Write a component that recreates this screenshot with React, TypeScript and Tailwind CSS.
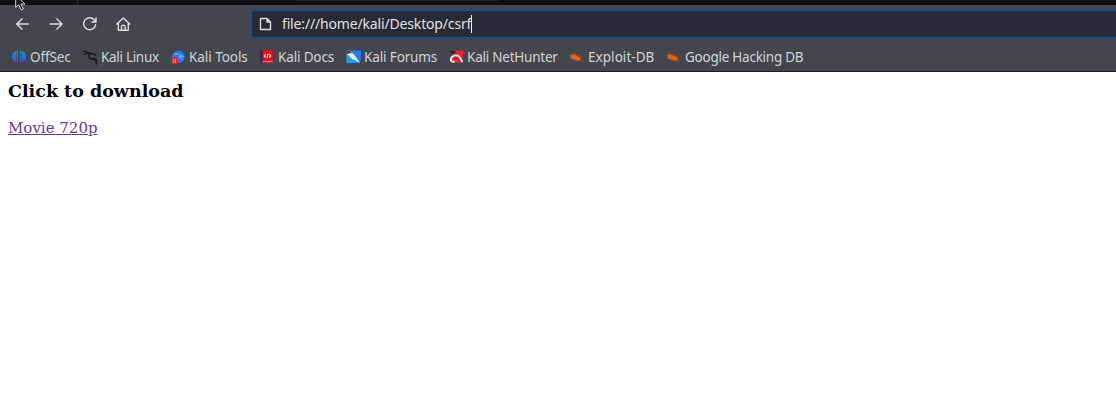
import type { ReactNode } from "react";

const OffSecIcon = () => (
  <svg viewBox="0 0 14 14" className="block size-3.5">
    <defs>
      <linearGradient id="offsec" x1="0" y1="0" x2="0" y2="1">
        <stop offset="0" stopColor="#169aa8" />
        <stop offset=".5" stopColor="#2572cf" />
        <stop offset="1" stopColor="#5a3cf0" />
      </linearGradient>
    </defs>
    <path d="M4 .8C1.6 1.6 0 4 0 6.8s1.7 4.8 4 5.3zM4.6.7C5.5.3 6 .8 6 2v10.5L4.6 13zM8 2c0-1.2.5-1.7 1.4-1.3V13L8 12.5zM10 .8C12.4 1.6 14 4 14 6.8s-1.7 4.8-4 5.3z" fill="url(#offsec)" />
  </svg>
);

const KaliIcon = () => (
  <svg viewBox="0 0 15 15" className="block h-[15px] w-[15px]" fill="none" stroke="#1b1c20" strokeLinecap="round" strokeLinejoin="round">
    <path d="M.6 1.4 4 1.9l3 1.4" strokeWidth="1.3" />
    <path d="m1.2 4.3 2.4-1 4 .2 3.4.5 1.8 1.4" strokeWidth="1.6" />
    <path d="M7.2 3.8C5 5.2 5.2 7.8 7.6 8.6c2.8.2 5 .8 5.6 3.4l.2 2" strokeWidth="1.7" />
    <path d="m8 8.5 3.8.2 2.3 1.7" strokeWidth="1.5" />
  </svg>
);

const ToolsIcon = () => (
  <svg viewBox="0 0 15 15" className="block h-[15px] w-[15px]">
    <circle cx="7.4" cy="6.8" r="6.2" fill="#2478f2" />
    <path d="M2.8 4.6c2-1.2 4.2-.9 6 .5 1.6 0 2.9.5 3.7 1.8-1.8-.9-3.3-.8-4.5.2 1.7.3 2.9 1.2 3.4 2.7" fill="none" stroke="#8fc0f4" strokeWidth=".9" />
    <circle cx="3.6" cy="10.8" r="3.5" fill="#e92732" />
    <path d="M2.8 8.8v4M4.5 8.8v4" stroke="#f2a0a1" strokeWidth=".8" />
  </svg>
);

const DocsIcon = () => (
  <svg viewBox="0 0 13 14" className="block h-3.5 w-[13px]">
    <path d="M.5 0H12.5v11.7H.5z" fill="#e01117" />
    <path d="M.5 0H2.5v13.5H.5z" fill="#391f48" />
    <path d="M2.5 11.3h10v1h-10z" fill="#b7b9bf" />
    <path d="M2.5 12.3h10v1.3h-10z" fill="#c41922" />
    <path d="M5.8 4.2 4.2 6l1.6 1.7M9.2 4.2 10.8 6 9.2 7.7M8.1 4 6.9 8" fill="none" stroke="#f7d9dc" strokeWidth="1.1" />
  </svg>
);

const ForumsIcon = () => (
  <svg viewBox="0 0 15 14" className="block h-3.5 w-[15px]">
    <path d="M4 .5h11v9L12.5 13H.5V4z" fill="#237bee" />
    <path d="M.5 4 11 13H.5z" fill="#209bf2" />
    <path d="M0 .8 3.5.6l5 4.4 5.7 8L5.8 8.8 1 4.2z" fill="#e4edf3" />
    <path d="m0 .5 3.4.1 3 2.6-2.2-.3L1 4.2z" fill="#34404d" />
  </svg>
);

const NetHunterIcon = () => (
  <svg viewBox="0 0 15 14" className="block h-3.5 w-[15px]">
    <path d="M3.5.5H15L12.6 12.6H.8L2.7 8z" fill="#e92537" />
    <path d="m.2.8 5 0 2.6 2-5 1.2z" fill="#34202b" />
    <path d="M5.6 11.6C2 12.6.8 9.4 2.8 7.2c2-2.1 5.2-2.4 7-.8 1.6 1.4 2.4 3.2 3.6 5.8" fill="none" stroke="#f1eaed" strokeWidth="1.9" />
    <path d="M4.9 9.6c1.2-1.6 3-2 4.5-.7l1 1.6" fill="none" stroke="#5a2630" strokeWidth="1" />
  </svg>
);

const ExploitIcon = () => (
  <svg viewBox="0 0 14 14" className="block size-3.5">
    <path d="M1.2 6.4C2 4.3 4.2 3.6 6.2 4.7l3.6 2c1.6 1 2.2 2.3 1.7 3.3-1.8 1-4.1.8-5.9-.2-2-1-3.6-1.7-4.4-3.4z" fill="#e6610e" />
    <path d="m3.4 5-.8-2.2M6 5l.2-2.6M8.2 6l1.8-1.6M10.4 7.5l2.2-.3M11 9.6l2 1.5M2 6.2.4 5.2M3 8.5l-2 .1M5.4 9.6l-1.5.9M8.5 10.4l.2 1" fill="none" stroke="#c5591b" strokeWidth=".8" />
  </svg>
);

const Bookmark = ({ icon, label, cell, text }: { icon: ReactNode; label: string; cell: string; text: string }) => (
  <a className={`flex shrink-0 items-center ${cell}`}>
    <span className="w-[18px] shrink-0">{icon}</span>
    <span className={`whitespace-nowrap ${text}`}>{label}</span>
  </a>
);

export default function App() {
  return (
    <div className="relative flex h-[403px] w-full flex-col overflow-hidden bg-white">
      <div className="flex h-[5px] shrink-0 bg-[#0e0f13]">
        <div className="ml-[77px] h-full w-px bg-[#292a30]" />
        <div className="ml-[217px] h-px w-[203px] bg-[#24252a]" />
      </div>
      <header className="flex h-[67px] shrink-0 flex-col border-b border-[#1e1f23] bg-[#44464e] font-['Noto_Sans',sans-serif] text-[#d2d3d6]">
        <nav className="flex h-[38px] shrink-0 items-center">
          <svg viewBox="0 0 140 38" className="h-[38px] w-[140px] shrink-0" fill="none" stroke="#dddde0" strokeWidth="1.4" strokeLinecap="round" strokeLinejoin="round">
            <path d="M28.3 19H16.7m5.2-5.1L16.7 19l5.2 5.1M50.3 19h11.8m-5.2-5.1 5.2 5.1-5.2 5.1" />
            <path d="M94 14.6a6 6 0 1 0 1.6 5M96 12.9v4.2h-4.2" />
            <path d="M96 13.4v3.7h-3.7z" fill="#dddde0" stroke="none" />
            <path d="m116.8 19 6.5-6.1 6.5 6.1M118.3 17.7v7.5h10v-7.5M121.5 25v-3.2c0-2.2 3.6-2.2 3.6 0V25" />
          </svg>
          <div className="ml-[110px] flex h-[30px] flex-1 items-center rounded-l-[4px] border-2 border-r-0 border-[#24498b] bg-[#282a35] shadow-[inset_0_0_1px_#31548d]">
            <svg viewBox="0 0 12 14" className="ml-[7px] h-3.5 w-[13px] shrink-0" fill="none" stroke="#dddde0" strokeWidth="1.4" strokeLinejoin="round">
              <path d="M1 1.5h6.5L11 5v7.5H1zM7.5 1.5V5H11" />
            </svg>
            <span className="ml-[10px] w-[189px] shrink-0 whitespace-nowrap text-[14px] leading-5 tracking-[-0.16px] text-[#e0e0e3]">file:///home/kali/Desktop/csrf</span>
            <span className="h-[18px] w-px shrink-0 bg-[#ececef]" />
          </div>
        </nav>
        <nav className="flex h-[28px] items-center pl-3 text-[13.5px] leading-5">
          <Bookmark icon={<OffSecIcon />} label="OffSec" cell="w-[71px]" text="tracking-[-0.1px]" />
          <Bookmark icon={<KaliIcon />} label="Kali Linux" cell="w-[88px]" text="tracking-[-0.3px]" />
          <Bookmark icon={<ToolsIcon />} label="Kali Tools" cell="w-[89px]" text="tracking-[-0.05px]" />
          <Bookmark icon={<DocsIcon />} label="Kali Docs" cell="w-[86px]" text="tracking-[-0.15px]" />
          <Bookmark icon={<ForumsIcon />} label="Kali Forums" cell="w-[103px]" text="tracking-[-0.13px]" />
          <Bookmark icon={<NetHunterIcon />} label="Kali NetHunter" cell="w-[120px]" text="tracking-[-0.23px]" />
          <Bookmark icon={<ExploitIcon />} label="Exploit-DB" cell="w-[97px]" text="pl-px tracking-[0.05px]" />
          <Bookmark icon={<ExploitIcon />} label="Google Hacking DB" cell="w-[140px]" text="pl-px tracking-[-0.25px]" />
        </nav>
      </header>
      <main className="flex flex-col items-start pl-2 pt-2 font-['DejaVu_Serif',serif]">
        <h1 className="text-[17.5px] leading-[23px] font-bold text-black">Click to download</h1>
        <a className="mt-[15px] text-[15px] leading-5 text-[#6a35a0] underline">Movie 720p</a>
      </main>
      <svg viewBox="0 0 12 11" className="absolute top-0 left-[15px] h-[11px] w-3">
        <path d="M.7-5v12.4l3-2.6 2.6 5.1 2.1-1.1-2.5-4.7H10z" fill="#17181c" stroke="#e0e0e2" />
      </svg>
    </div>
  );
}
